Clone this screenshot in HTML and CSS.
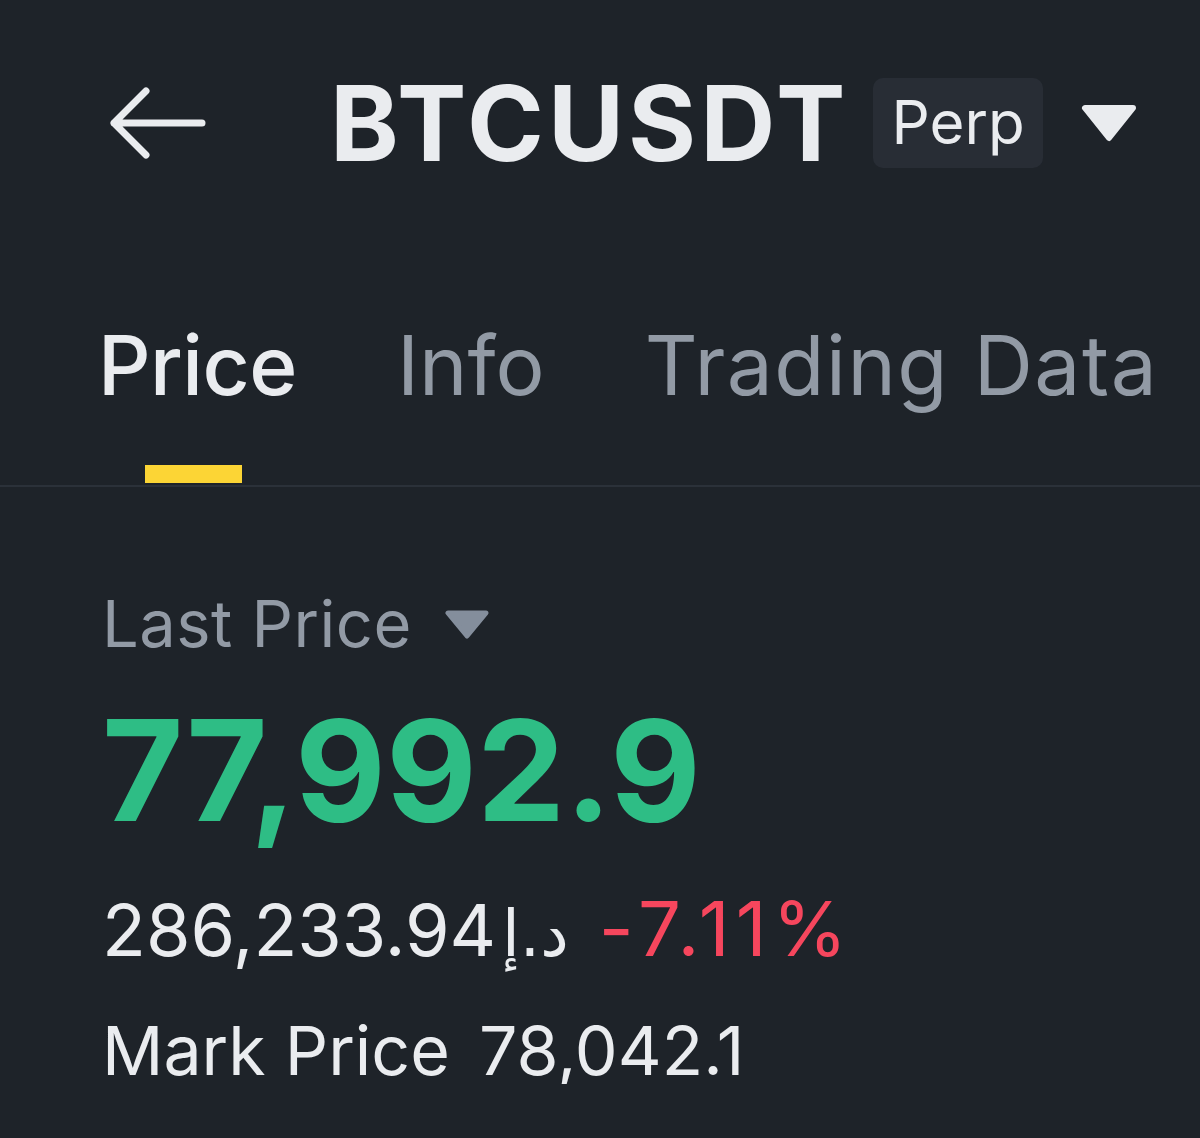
FILE: index.html
```html
<!DOCTYPE html>
<html lang="en">
<head>
  <meta charset="UTF-8" />
  <meta name="viewport" content="width=device-width, initial-scale=1.0"/>
  <title>BTCUSDT Perp</title>
  <link rel="stylesheet" href="styles.css">
</head>
<body>
  <div class="header">
    <svg class="back" width="100" height="80" viewBox="0 0 100 80">
      <path d="M6 40 H94 M38 8 L6 40 L38 72" fill="none" stroke="#eaecef" stroke-width="7" stroke-linecap="round" stroke-linejoin="round"/>
    </svg>
    <h1 class="symbol">BTCUSDT</h1>
    <span class="pill">Perp</span>
    <svg class="caret" width="56" height="38" viewBox="0 0 56 38">
      <path d="M4 4 H52 L28 34 Z" fill="#eaecef" stroke="#eaecef" stroke-width="6" stroke-linejoin="round"/>
    </svg>
  </div>

  <div class="tabs">
    <div class="tab active">Price<span class="bar"></span></div>
    <div class="tab">Info</div>
    <div class="tab">Trading Data</div>
  </div>

  <div class="content">
    <div class="label">Last Price
      <svg width="46" height="30" viewBox="0 0 46 30">
        <path d="M4 4 H42 L23 27 Z" fill="#848e9c" stroke="#848e9c" stroke-width="5" stroke-linejoin="round"/>
      </svg>
    </div>
    <div class="last">77,992.9</div>
    <div class="fiat">
      <span>286,233.94</span><span class="aed" dir="rtl">د.إ</span>
      <span class="down">-7.11%</span>
    </div>
    <div class="mark">Mark Price <span>78,042.1</span></div>
  </div>
</body>
</html>
```

FILE: styles.css
```css
body { margin: 0; background: #1e2329; color: #eaecef; font-family: Inter, "Noto Sans", "DejaVu Sans", sans-serif; }

.header { display: flex; align-items: center; height: 245px; padding-left: 108px; }
.back { margin-right: 122px; }
.symbol { margin: 0; font-size: 104px; font-weight: 700; letter-spacing: 4px; line-height: 1; }
.pill { margin-left: 24px; background: #282d35; border-radius: 10px; padding: 12px 18px 14px; font-size: 60px; line-height: 64px; }
.caret { margin-left: 38px; }

.tabs { display: flex; padding-left: 98px; gap: 100px; border-bottom: 2px solid #2b3139; height: 242px; box-sizing: border-box; }
.tab { position: relative; font-size: 82px; line-height: 1; padding-top: 80px; color: #929aa5; }
.tab:last-child { letter-spacing: 1.5px; }
.tab.active { color: #eaecef; font-weight: 500; letter-spacing: -0.5px; }
.bar { position: absolute; left: 47px; top: 220px; width: 97px; height: 18px; background: #fcd535; }

.content { padding: 104px 0 0 102px; }
.label { display: flex; align-items: center; gap: 32px; font-size: 65px; letter-spacing: 0.5px; color: #929aa5; line-height: 1; }
.last { margin-top: 44px; font-size: 140px; font-weight: 700; color: #2ebd85; line-height: 1; }
.fiat { display: flex; align-items: baseline; margin-top: 50px; font-size: 72px; line-height: 1; }
.aed { margin-left: 6px; font-family: "DejaVu Sans", sans-serif; font-size: 64px; }
.down { display: inline-block; margin-left: 30px; color: #f6465d; font-size: 76px; letter-spacing: 6px; }
.mark { margin-top: 50px; font-size: 68px; line-height: 1; }
.mark span { margin-left: 10px; }
```
